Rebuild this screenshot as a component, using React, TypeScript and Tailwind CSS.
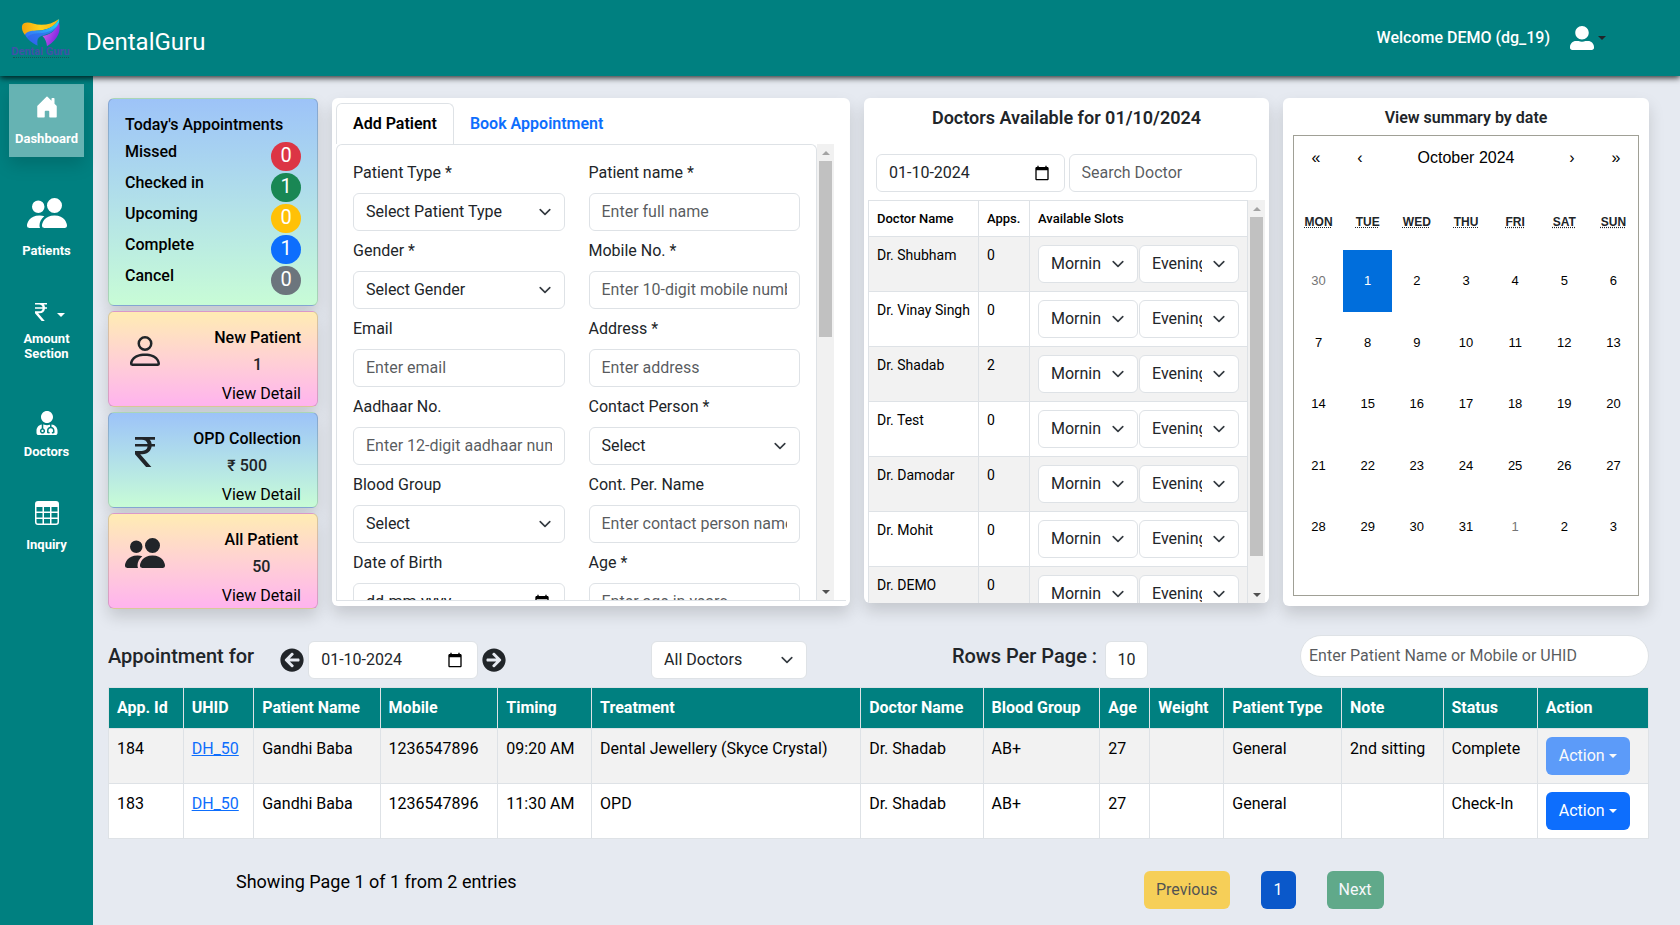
import { useId, type ReactNode } from "react";
import { BsCurrencyRupee, BsHouseDoorFill, BsPeopleFill, BsPerson, BsTable } from "react-icons/bs";
import { FaArrowCircleLeft, FaArrowCircleRight, FaUserAlt, FaUserMd } from "react-icons/fa";

const control =
  "h-[38px] w-full min-w-0 rounded-md border border-[#dee2e6] bg-white text-base text-[#212529] placeholder:text-[#212529]/75 placeholder:opacity-100";

function Caret({ className = "" }: { className?: string }) {
  return (
    <svg viewBox="0 0 8 4" className={`h-1 w-2 ${className}`} fill="currentColor" aria-hidden="true">
      <path d="M0 0h8L4 4z" />
    </svg>
  );
}

function Select({ label, options, id }: { label?: string; options: string[]; id?: string }) {
  return (
    <div className="relative w-full min-w-0">
      <select id={id} aria-label={label} className={`${control} appearance-none pr-9 pl-3`}>
        {options.map((o) => (
          <option key={o}>{o}</option>
        ))}
      </select>
      <svg
        viewBox="0 0 16 16"
        className="pointer-events-none absolute top-[11px] right-3 size-4"
        fill="none"
        stroke="#343a40"
        strokeWidth="2"
        strokeLinecap="round"
        strokeLinejoin="round"
        aria-hidden="true"
      >
        <path d="m2 5 6 6 6-6" transform="translate(1.6 1.6) scale(.8)" />
      </svg>
    </div>
  );
}

function DateField({ label, value, placeholder, id }: { label?: string; value?: string; placeholder?: string; id?: string }) {
  return (
    <div className="flex h-[38px] w-full min-w-0 items-center rounded-md border border-[#dee2e6] bg-white pr-[14px] pl-3">
      <input
        id={id}
        aria-label={label}
        type="text"
        defaultValue={value}
        placeholder={placeholder}
        className="w-full min-w-0 bg-transparent text-base text-[#212529] placeholder:text-[#212529] placeholder:opacity-100"
      />
      <button type="button" aria-label="Open calendar">
        <svg viewBox="0 0 24 24" className="size-4" aria-hidden="true">
          <path d="M20 3h-1V1h-2v2H7V1H5v2H4c-1.1 0-2 .9-2 2v16c0 1.1.9 2 2 2h16c1.1 0 2-.9 2-2V5c0-1.1-.9-2-2-2zm0 18H4V8h16v13z" />
        </svg>
      </button>
    </div>
  );
}

function ScrollBar({ thumb }: { thumb: string }) {
  return (
    <div className="flex w-[17px] shrink-0 flex-col items-center bg-[#f1f1f1]" aria-hidden="true">
      <div className="flex h-[17px] items-center text-[#a3a3a3]">
        <svg viewBox="0 0 8 4" className="h-1 w-2" fill="currentColor">
          <path d="M0 4h8L4 0z" />
        </svg>
      </div>
      <div className="flex w-full grow justify-center">
        <div className={`w-[13px] bg-[#c1c1c1] ${thumb}`} />
      </div>
      <div className="flex h-[17px] items-center text-[#505050]">
        <svg viewBox="0 0 8 4" className="h-1 w-2" fill="currentColor">
          <path d="M0 0h8L4 4z" />
        </svg>
      </div>
    </div>
  );
}

function Logo() {
  return (
    <div className="flex w-[65px] flex-col items-center">
      <svg viewBox="0 0 40 28" className="h-7 w-10" aria-hidden="true">
        <defs>
          <linearGradient id="lg-gold" x1="0" y1="0" x2="1" y2="0">
            <stop offset="0" stopColor="#f5a30a" />
            <stop offset=".5" stopColor="#ffd21c" />
            <stop offset="1" stopColor="#f5b018" />
          </linearGradient>
          <linearGradient id="lg-blue" x1="0" y1="1" x2="1" y2="0">
            <stop offset="0" stopColor="#3a5df0" />
            <stop offset=".5" stopColor="#2f98f8" />
            <stop offset="1" stopColor="#1fe0f0" />
          </linearGradient>
          <linearGradient id="lg-violet" x1="0" y1="0" x2="1" y2=".6">
            <stop offset="0" stopColor="#e070f0" />
            <stop offset="1" stopColor="#7a1fe0" />
          </linearGradient>
        </defs>
        <path d="M1 7C2 3 7 3 12 4.500 20 7 30 6 38 0 34 8 26 11 18 11.500 11 12 6 13 4 16 1.500 13 .5 10 1 7z" fill="url(#lg-gold)" />
        <path d="M4 15.500C6 12 11 11.500 18 11.500 27 11 34 7 38 0 38.500 3 38 5 36 8 31 15 24 15 19 17.500 16 19 16 22 16.500 26.500 11 24 6 20 4 15.500z" fill="url(#lg-blue)" />
        <path d="M6 18.500C10 14 16 14.500 21 14 27 13.500 33 11 37 6 33 14 26 15.500 20.500 17 16.500 19 16 22 16.500 26.500 12 24.500 8 22 6 18.500z" fill="#2b5be8" opacity=".5" />
        <path d="M21.500 17C28 16 34 13 38 3.500 40 11 38 20 26 27.300 25.500 23 24.500 20 21.500 17z" fill="url(#lg-violet)" />
      </svg>
      <span className="text-[11px] leading-[9px] font-bold whitespace-nowrap text-[#4052a8]">Dental Guru</span>
      <span className="mt-px w-14 border-t border-dotted border-[#17555a]" />
    </div>
  );
}

function NavItem({ icon, label, className }: { icon: ReactNode; label: string; className: string }) {
  return (
    <a
      href="#"
      className={`mx-[9px] flex flex-col items-center text-center text-[13px] leading-[15px] font-bold text-white ${className}`}
    >
      {icon}
      <span>{label}</span>
    </a>
  );
}

const counts = [
  { label: "Missed", n: 0, cls: "bg-[#dc3545]" },
  { label: "Checked in", n: 1, cls: "bg-[#198754]" },
  { label: "Upcoming", n: 0, cls: "bg-[#ffc107]" },
  { label: "Complete", n: 1, cls: "bg-[#0d6efd]" },
  { label: "Cancel", n: 0, cls: "bg-[#6c757d]" },
];

const cool = "bg-linear-to-b from-[#9dc3f8] to-[#c8fcd6]";
const warm = "bg-linear-to-b from-[#ffecb3] to-[#ffb3ee]";
const cardShadow = "shadow-[0_8px_16px_rgba(0,0,0,0.15)]";

function StatCard({ tone, icon, title, value }: { tone: string; icon: ReactNode; title: string; value: string }) {
  return (
    <section className={`flex h-24 justify-between rounded-md border border-black/15 px-4 pt-[14px] text-[#212529] ${tone} ${cardShadow}`}>
      <div className="mt-[5px] flex h-10 w-10 justify-center">{icon}</div>
      <div className="flex flex-col">
        <h2 className="text-center text-base leading-6 font-medium text-black">{title}</h2>
        <p className="mt-[3px] text-center text-base leading-6 font-medium">{value}</p>
        <a href="#" className="mt-[5px] text-right text-base leading-6 text-black">
          View Detail
        </a>
      </div>
    </section>
  );
}

type FieldDef = { label: string; kind: "select" | "text" | "date"; text: string };

const fields: FieldDef[] = [
  { label: "Patient Type *", kind: "select", text: "Select Patient Type" },
  { label: "Patient name *", kind: "text", text: "Enter full name" },
  { label: "Gender *", kind: "select", text: "Select Gender" },
  { label: "Mobile No. *", kind: "text", text: "Enter 10-digit mobile number" },
  { label: "Email", kind: "text", text: "Enter email" },
  { label: "Address *", kind: "text", text: "Enter address" },
  { label: "Aadhaar No.", kind: "text", text: "Enter 12-digit aadhaar number" },
  { label: "Contact Person *", kind: "select", text: "Select" },
  { label: "Blood Group", kind: "select", text: "Select" },
  { label: "Cont. Per. Name", kind: "text", text: "Enter contact person name" },
  { label: "Date of Birth", kind: "date", text: "dd-mm-yyyy" },
  { label: "Age *", kind: "text", text: "Enter age in years" },
];

function Field({ label, kind, text }: FieldDef) {
  const id = useId();
  return (
    <div className="flex min-w-0 flex-col gap-2">
      <label htmlFor={id} className="text-base leading-6">
        {label}
      </label>
      {kind === "select" && <Select id={id} options={[text]} />}
      {kind === "text" && <input id={id} type="text" placeholder={text} className={`${control} px-3 pb-px`} />}
      {kind === "date" && <DateField id={id} placeholder={text} />}
    </div>
  );
}

const doctors: [string, number][] = [
  ["Dr. Shubham", 0],
  ["Dr. Vinay Singh", 0],
  ["Dr. Shadab", 2],
  ["Dr. Test", 0],
  ["Dr. Damodar", 0],
  ["Dr. Mohit", 0],
  ["Dr. DEMO", 0],
];

const weekdays: [string, string][] = [
  ["Mon", "Monday"],
  ["Tue", "Tuesday"],
  ["Wed", "Wednesday"],
  ["Thu", "Thursday"],
  ["Fri", "Friday"],
  ["Sat", "Saturday"],
  ["Sun", "Sunday"],
];

const days = [30, ...Array.from({ length: 31 }, (_, i) => i + 1), 1, 2, 3];

function dayClass(i: number) {
  if (i === 1) return "bg-[#006edc] text-white";
  if (i === 0 || i === 32) return "text-[#757575]";
  return "text-black";
}

const columns = [
  "App. Id", "UHID", "Patient Name", "Mobile", "Timing", "Treatment", "Doctor Name",
  "Blood Group", "Age", "Weight", "Patient Type", "Note", "Status", "Action",
];

const appointments = [
  ["184", "DH_50", "Gandhi Baba", "1236547896", "09:20 AM", "Dental Jewellery (Skyce Crystal)", "Dr. Shadab", "AB+", "27", "", "General", "2nd sitting", "Complete"],
  ["183", "DH_50", "Gandhi Baba", "1236547896", "11:30 AM", "OPD", "Dr. Shadab", "AB+", "27", "", "General", "", "Check-In"],
];

export default function App() {
  return (
    <div className="flex min-h-screen flex-col bg-[#e6eaf1] font-[Roboto,'Liberation_Sans',sans-serif] text-[#212529]">
      <header className="relative z-10 flex h-[76px] items-center justify-between bg-[#008080] pr-[74px] pl-2 text-white shadow-[0_2px_6px_rgba(0,0,0,0.8)]">
        <div className="flex items-center gap-[13px]">
          <Logo />
          <h1 className="pt-2 text-2xl leading-8">DentalGuru</h1>
        </div>
        <div className="flex items-center">
          <span className="text-base leading-6 font-medium">Welcome DEMO (dg_19)</span>
          <button type="button" aria-label="Account menu" className="ml-5 flex items-center gap-1">
            <FaUserAlt size={24} />
            <Caret className="text-[#212529]" />
          </button>
        </div>
      </header>

      <div className="flex grow">
        <nav className="w-[93px] shrink-0 bg-[#008080] pt-2">
          <NavItem
            className="h-[73px] bg-white/40 pt-[11px] shadow-[0_8px_16px_rgba(0,0,0,0.15)]"
            icon={<BsHouseDoorFill size={24} className="mb-3" />}
            label="Dashboard"
          />
          <NavItem className="mt-9" icon={<BsPeopleFill size={40} className="mb-[10px]" />} label="Patients" />
          <NavItem
            className="mt-[42px]"
            icon={
              <span className="mb-[7px] flex items-center gap-1">
                <BsCurrencyRupee size={24} />
                <Caret className="mt-[5px]" />
              </span>
            }
            label="Amount Section"
          />
          <NavItem className="mt-[50px]" icon={<FaUserMd size={24} className="mb-[9px]" />} label="Doctors" />
          <NavItem className="mt-[42px]" icon={<BsTable size={24} className="mb-3" />} label="Inquiry" />
        </nav>

        <main className="min-w-0 grow pt-[22px] pr-[31px] pb-4 pl-[15px]">
          <div className="grid grid-cols-[210px_518fr_405fr_366fr] items-start gap-[14px]">
            <div className="flex flex-col gap-[5px]">
              <section className={`h-52 rounded-md border border-black/15 px-4 pt-[14px] font-medium text-black ${cool} ${cardShadow}`}>
                <h2 className="text-base leading-6 font-medium">Today's Appointments</h2>
                <ul className="mt-[3px]">
                  {counts.map((c) => (
                    <li key={c.label} className="flex h-[31px] justify-between text-base leading-6">
                      {c.label}
                      <span className={`mt-[2px] flex h-[29px] w-[30px] justify-center rounded-full text-xl leading-[26px] font-normal text-white ${c.cls}`}>
                        {c.n}
                      </span>
                    </li>
                  ))}
                </ul>
              </section>
              <StatCard tone={warm} icon={<BsPerson size={40} />} title="New Patient" value="1" />
              <StatCard tone={cool} icon={<BsCurrencyRupee size={40} />} title="OPD Collection" value="₹ 500" />
              <StatCard tone={warm} icon={<BsPeopleFill size={40} />} title="All Patient" value="50" />
            </div>

            <section className={`rounded-md bg-white pt-[5px] pr-1 pb-[5px] pl-1 ${cardShadow}`}>
              <div className="flex h-[41px] text-base leading-6 font-semibold">
                <button type="button" className="rounded-t-md border border-b-0 border-[#dee2e6] px-4 text-black">
                  Add Patient
                </button>
                <button type="button" className="px-4 text-[#0d6efd]">
                  Book Appointment
                </button>
              </div>
              <div className="flex h-[457px] border-b border-[#dee2e6] pr-3">
                <div className="grow overflow-y-auto rounded-t-md border border-b-0 border-[#dee2e6] [scrollbar-width:none]">
                  <form className="grid grid-cols-2 gap-x-6 gap-y-2 px-4 pt-4">
                    {fields.map((f) => (
                      <Field key={f.label} {...f} />
                    ))}
                  </form>
                </div>
                <ScrollBar thumb="h-[176px]" />
              </div>
            </section>

            <section className={`h-[505px] overflow-hidden rounded-md bg-white px-1 pt-[9px] ${cardShadow}`}>
              <h2 className="text-center text-lg leading-[22px] font-semibold">Doctors Available for 01/10/2024</h2>
              <div className="mt-[25px] mb-2 grid grid-cols-2 gap-1 px-2">
                <DateField label="Availability date" value="01-10-2024" />
                <input aria-label="Search Doctor" type="text" placeholder="Search Doctor" className={`${control} px-3 pb-px`} />
              </div>
              <div className="flex h-[403px]">
                <div className="grow overflow-y-auto [scrollbar-width:none]">
                  <table className="w-full border-collapse text-sm text-black">
                    <thead>
                      <tr className="text-left text-[13px] leading-[19px]">
                        <th className="w-[110px] border border-[#dee2e6] p-2 font-medium">Doctor Name</th>
                        <th className="w-[51px] border border-[#dee2e6] p-2 font-medium">Apps.</th>
                        <th className="border border-[#dee2e6] p-2 font-medium">Available Slots</th>
                      </tr>
                    </thead>
                    <tbody>
                      {doctors.map(([name, apps]) => (
                        <tr key={name} className="align-top leading-[21px] odd:bg-[#f2f2f2]">
                          <td className="border border-[#dee2e6] p-2 whitespace-nowrap">{name}</td>
                          <td className="border border-[#dee2e6] p-2">{apps}</td>
                          <td className="border border-[#dee2e6] p-2">
                            <div className="flex gap-px">
                              <Select label={`${name} morning slots`} options={["Morning"]} />
                              <Select label={`${name} evening slots`} options={["Evening"]} />
                            </div>
                          </td>
                        </tr>
                      ))}
                    </tbody>
                  </table>
                </div>
                <ScrollBar thumb="h-[339px]" />
              </div>
            </section>

            <section className={`rounded-md bg-white px-[10px] pt-[9px] pb-[10px] ${cardShadow}`}>
              <h2 className="mb-[6px] text-center text-base leading-[22px] font-semibold">View summary by date</h2>
              <div className="h-[461px] border border-[#a0a096] font-['Liberation_Sans',Arial,sans-serif]">
                <div className="mb-[14px] flex h-11 text-base text-black">
                  <button type="button" aria-label="Previous year" className="w-11">«</button>
                  <button type="button" aria-label="Previous month" className="w-11">‹</button>
                  <button type="button" className="grow">October 2024</button>
                  <button type="button" aria-label="Next month" className="w-11">›</button>
                  <button type="button" aria-label="Next year" className="w-11">»</button>
                </div>
                <div className="grid h-14 grid-cols-7 items-center text-center text-xs font-bold uppercase">
                  {weekdays.map(([short, full]) => (
                    <abbr key={short} title={full}>
                      {short}
                    </abbr>
                  ))}
                </div>
                <div className="grid h-[308px] grid-cols-7 grid-rows-5 text-[13px]">
                  {days.map((d, i) => (
                    <button key={i} type="button" className={dayClass(i)}>
                      {d}
                    </button>
                  ))}
                </div>
              </div>
            </section>
          </div>

          <div className="mt-[26px] flex h-[52px] items-start justify-between">
            <div className="flex items-start">
              <h2 className="pt-[9px] text-xl leading-6 font-medium">Appointment for</h2>
              <div className="mt-[6px] ml-[26px] flex items-center gap-1">
                <button type="button" aria-label="Previous day">
                  <FaArrowCircleLeft size={24} />
                </button>
                <div className="w-[170px]">
                  <DateField label="Appointment date" value="01-10-2024" />
                </div>
                <button type="button" aria-label="Next day">
                  <FaArrowCircleRight size={24} />
                </button>
              </div>
            </div>
            <div className="mt-[6px] w-[156px]">
              <Select label="Doctor" options={["All Doctors"]} />
            </div>
            <div className="flex items-start gap-2">
              <label htmlFor="rows" className="pt-[9px] text-xl leading-6 font-medium">
                Rows Per Page :
              </label>
              <div className="mt-[6px] w-[43px]">
                <input id="rows" type="text" defaultValue="10" className={`${control} pb-px text-center`} />
              </div>
            </div>
            <div className="flex w-[356px] justify-end">
              <input
                aria-label="Search patients"
                type="search"
                placeholder="Enter Patient Name or Mobile or UHID"
                className="h-[42px] w-[349px] rounded-full border border-[#dee2e6] bg-white px-2 pb-px text-base placeholder:text-[#212529]/75 placeholder:opacity-100"
              />
            </div>
          </div>

          <table className="w-full border-collapse text-base leading-6 text-black">
            <thead>
              <tr className="bg-[#008080] text-left text-white">
                {columns.map((c) => (
                  <th key={c} className="border border-[#dee2e6] p-2 font-bold whitespace-nowrap">
                    {c}
                  </th>
                ))}
              </tr>
            </thead>
            <tbody>
              {appointments.map((row, r) => (
                <tr key={row[0]} className="bg-white align-top odd:bg-[#f2f2f2]">
                  {row.map((cell, i) => (
                    <td key={i} className="border border-[#dee2e6] p-2 whitespace-nowrap">
                      {i === 1 ? (
                        <a href="#" className="text-[#0d6efd] underline">
                          {cell}
                        </a>
                      ) : (
                        cell
                      )}
                    </td>
                  ))}
                  <td className="border border-[#dee2e6] p-2">
                    <button
                      type="button"
                      disabled={r === 0}
                      className="flex h-[38px] items-center gap-1 rounded-md bg-[#0d6efd] px-[13px] text-white disabled:opacity-65"
                    >
                      Action
                      <Caret />
                    </button>
                  </td>
                </tr>
              ))}
            </tbody>
          </table>

          <div className="mt-8 grid grid-cols-2">
            <p className="pl-32 text-lg leading-[22px] text-black">Showing Page 1 of 1 from 2 entries</p>
            <div className="flex justify-center gap-[31px] text-base">
              <button type="button" disabled className="h-[38px] rounded-md bg-[#ffc107] px-3 text-black opacity-65">
                Previous
              </button>
              <button type="button" className="h-[38px] rounded-md bg-[#0a58ca] px-[13px] text-white">
                1
              </button>
              <button type="button" disabled className="h-[38px] rounded-md bg-[#198754] px-3 text-white opacity-65">
                Next
              </button>
            </div>
          </div>
        </main>
      </div>
    </div>
  );
}
